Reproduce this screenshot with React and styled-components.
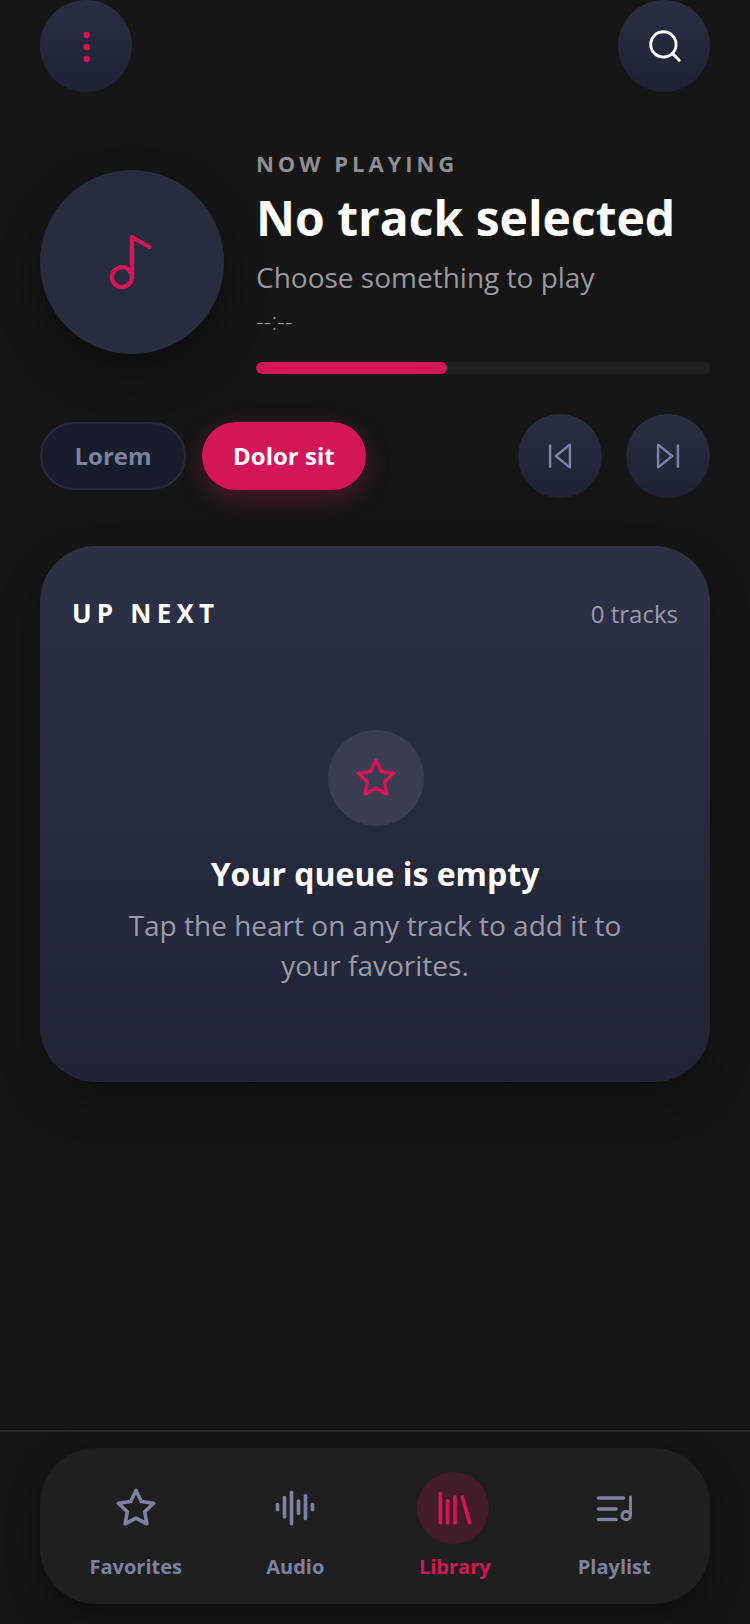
import React from "react";
import styled, { createGlobalStyle } from "styled-components";
import { Search, Music2, AudioLines, Library } from "lucide-react";

const PINK = "#d31658";
const MUTED = "#7d82a3";

const Global = createGlobalStyle`
  html, body { margin: 0; padding: 0; background: #161616; }
  * { box-sizing: border-box; }
  body { font-family: "Open Sans", "Noto Sans", sans-serif; }
`;

const Screen = styled.div`
  width: 750px;
  height: 1624px;
  display: flex;
  flex-direction: column;
  background: #161616;
  overflow: hidden;
`;
const Main = styled.main`
  flex: 1;
  padding: 0 40px;
  display: flex;
  flex-direction: column;
`;
const TopBar = styled.div`
  display: flex;
  justify-content: space-between;
`;
const RoundButton = styled.button`
  width: ${(p) => p.$size}px;
  height: ${(p) => p.$size}px;
  border: none;
  border-radius: 50%;
  padding: 0;
  display: flex;
  align-items: center;
  justify-content: center;
  background: linear-gradient(180deg, #2a2e43 0%, #1f2236 100%);
  color: ${(p) => p.$color};
`;
const Hero = styled.section`
  margin-top: 56px;
  display: flex;
  align-items: center;
  gap: 32px;
`;
const Album = styled.div`
  width: 184px;
  height: 184px;
  margin-top: 2px;
  flex: none;
  border-radius: 50%;
  background: #282c3f;
  color: ${PINK};
  display: flex;
  align-items: center;
  justify-content: center;
  box-shadow: 0 20px 40px rgba(0, 0, 0, 0.4);
`;
const Info = styled.div`
  flex: 1;
  min-width: 0;
`;
const Eyebrow = styled.div`
  font-size: 22px;
  line-height: 30px;
  font-weight: 700;
  letter-spacing: 3.96px;
  color: #8e8e93;
`;
const Title = styled.h1`
  margin: 8px 0 0;
  font-size: 48px;
  line-height: 64px;
  font-weight: 700;
  color: #fff;
`;
const Subtitle = styled.div`
  margin-top: 6px;
  font-size: 28px;
  line-height: 42px;
  color: #99999f;
`;
const Time = styled.div`
  margin-top: 8px;
  font-size: 24px;
  line-height: 30px;
  font-weight: 300;
  color: #99999f;
`;
const Track = styled.div`
  margin-top: 26px;
  height: 12px;
  border-radius: 6px;
  background: #202020;
  overflow: hidden;
`;
const Fill = styled.div`
  height: 100%;
  border-radius: 6px;
  background: ${PINK};
`;
const Controls = styled.div`
  margin-top: 40px;
  display: flex;
  align-items: center;
  gap: 16px;
`;
const Pill = styled.button`
  height: 68px;
  padding: 0 ${(p) => (p.$active ? 31 : 32.5)}px 2px;
  border-radius: 34px;
  font-family: inherit;
  font-size: 24px;
  font-weight: 700;
  color: ${(p) => (p.$active ? "#fff" : MUTED)};
  background: ${(p) => (p.$active ? PINK : "#191c2b")};
  border: ${(p) => (p.$active ? "none" : "2px solid #262a3d")};
  box-shadow: ${(p) => (p.$active ? "0 8px 24px rgba(211, 22, 88, 0.3)" : "none")};
`;
const Skips = styled.div`
  margin-left: auto;
  display: flex;
  gap: 24px;
`;
const Card = styled.section`
  margin-top: 48px;
  height: 536px;
  border-radius: 56px;
  padding: 48px 32px;
  display: flex;
  flex-direction: column;
  background: linear-gradient(180deg, #2d3145 0%, #212437 100%);
  box-shadow: 0 20px 40px rgba(0, 0, 0, 0.3);
`;
const CardHead = styled.div`
  display: flex;
  justify-content: space-between;
  align-items: center;
  height: 38px;
`;
const CardTitle = styled.h2`
  margin: 0;
  font-size: 26px;
  font-weight: 700;
  letter-spacing: 5.2px;
  color: #fff;
`;
const Count = styled.span`
  font-size: 24px;
  color: #9a9ba8;
`;
const Empty = styled.div`
  margin-top: 98px;
  display: flex;
  flex-direction: column;
  align-items: center;
  text-align: center;
`;
const EmptyBadge = styled.div`
  width: 96px;
  height: 96px;
  margin-left: 2px;
  border-radius: 50%;
  background: #3a3e50;
  color: ${PINK};
  display: flex;
  align-items: center;
  justify-content: center;
`;
const EmptyTitle = styled.h3`
  margin: 26px 0 0;
  font-size: 32px;
  line-height: 44px;
  font-weight: 700;
  color: #fff;
`;
const EmptyText = styled.p`
  margin: 9px 0 0;
  width: 520px;
  font-size: 28px;
  line-height: 40px;
  color: #9a9ba8;
`;
const Footer = styled.footer`
  border-top: 2px solid #2a2a2a;
  padding: 16px 40px 20px;
`;
const NavBar = styled.nav`
  height: 156px;
  border-radius: 56px;
  background: #1f1f1f;
  padding: 24px 16px 0;
  display: grid;
  grid-template-columns: repeat(4, 1fr);
  box-shadow: 0 12px 32px rgba(0, 0, 0, 0.4);
`;
const NavItem = styled.div`
  display: flex;
  flex-direction: column;
  align-items: center;
  color: ${(p) => (p.$active ? PINK : MUTED)};
`;
const NavIcon = styled.div`
  width: 72px;
  height: 72px;
  margin-right: ${(p) => (p.$active ? 3 : 0)}px;
  border-radius: 50%;
  display: flex;
  align-items: center;
  justify-content: center;
  background: ${(p) => (p.$active ? "rgba(211, 22, 88, 0.2)" : "transparent")};
  svg { margin-left: ${(p) => (p.$active ? 3 : 0)}px; }
`;
const NavLabel = styled.span`
  margin-top: 8px;
  font-size: 20px;
  line-height: 30px;
  font-weight: 700;
`;

const stroke = {
  fill: "none",
  stroke: "currentColor",
  strokeLinecap: "round",
  strokeLinejoin: "round",
};

const Dots = () => (
  <svg width="40" height="40" viewBox="0 0 40 40" fill="currentColor">
    <circle cx="20.7" cy="9" r="3.2" />
    <circle cx="20.7" cy="21" r="3.2" />
    <circle cx="20.7" cy="33" r="3.2" />
  </svg>
);
const StarIcon = ({ size = 42 }) => (
  <svg width={size} height={size} viewBox="0 0 24 24" {...stroke} strokeWidth="2.1">
    <polygon points="12 2 15.09 8.26 22 9.27 17 14.14 18.18 21.02 12 17.77 5.82 21.02 7 14.14 2 9.27 8.91 8.26 12 2" />
  </svg>
);
const PrevIcon = () => (
  <svg width="34" height="34" viewBox="0 0 24 24" {...stroke} strokeWidth="1.7">
    <polygon points="19 20 9 12 19 4 19 20" />
    <line x1="5" y1="19.5" x2="5" y2="4.5" />
  </svg>
);
const NextIcon = () => (
  <svg width="34" height="34" viewBox="0 0 24 24" {...stroke} strokeWidth="1.7">
    <polygon points="5 4 15 12 5 20 5 4" />
    <line x1="19" y1="4.5" x2="19" y2="19.5" />
  </svg>
);
const FavoritesIcon = () => <StarIcon size={42} />;
const AudioIcon = () => <AudioLines size={42} strokeWidth={2.1} />;
const LibraryIcon = () => <Library size={44} strokeWidth={2} />;
const PlaylistIcon = () => (
  <svg width="44" height="44" viewBox="0 0 44 44" {...stroke} strokeWidth="3.6">
    <path d="M6.5 12H31.5M6.5 23H24M6.5 33.5H24" />
    <path d="M38.5 11V29.5" strokeWidth="3" />
    <circle cx="34.2" cy="29.5" r="4.2" strokeWidth="3.2" />
  </svg>
);

const nav = [
  ["Favorites", FavoritesIcon],
  ["Audio", AudioIcon],
  ["Library", LibraryIcon, true],
  ["Playlist", PlaylistIcon],
];

export default function App() {
  return (
    <Screen>
      <Global />
      <Main>
        <TopBar>
          <RoundButton $size={92} $color={PINK}><Dots /></RoundButton>
          <RoundButton $size={92} $color="#fff"><Search size={38} strokeWidth={1.8} style={{ marginLeft: 1 }} /></RoundButton>
        </TopBar>
        <Hero>
          <Album><Music2 size={60} strokeWidth={1.7} /></Album>
          <Info>
            <Eyebrow>NOW PLAYING</Eyebrow>
            <Title>No track selected</Title>
            <Subtitle>Choose something to play</Subtitle>
            <Time>--:--</Time>
            <Track><Fill style={{ width: "42%" }} /></Track>
          </Info>
        </Hero>
        <Controls>
          <Pill>Lorem</Pill>
          <Pill $active>Dolor sit</Pill>
          <Skips>
            <RoundButton $size={84} $color={MUTED}><PrevIcon /></RoundButton>
            <RoundButton $size={84} $color={MUTED}><NextIcon /></RoundButton>
          </Skips>
        </Controls>
        <Card>
          <CardHead>
            <CardTitle>UP NEXT</CardTitle>
            <Count>0 tracks</Count>
          </CardHead>
          <Empty>
            <EmptyBadge><StarIcon size={42} /></EmptyBadge>
            <EmptyTitle>Your queue is empty</EmptyTitle>
            <EmptyText>Tap the heart on any track to add it to your favorites.</EmptyText>
          </Empty>
        </Card>
      </Main>
      <Footer>
        <NavBar>
          {nav.map(([label, Icon, active]) => (
            <NavItem key={label} $active={active}>
              <NavIcon $active={active}><Icon /></NavIcon>
              <NavLabel>{label}</NavLabel>
            </NavItem>
          ))}
        </NavBar>
      </Footer>
    </Screen>
  );
}
